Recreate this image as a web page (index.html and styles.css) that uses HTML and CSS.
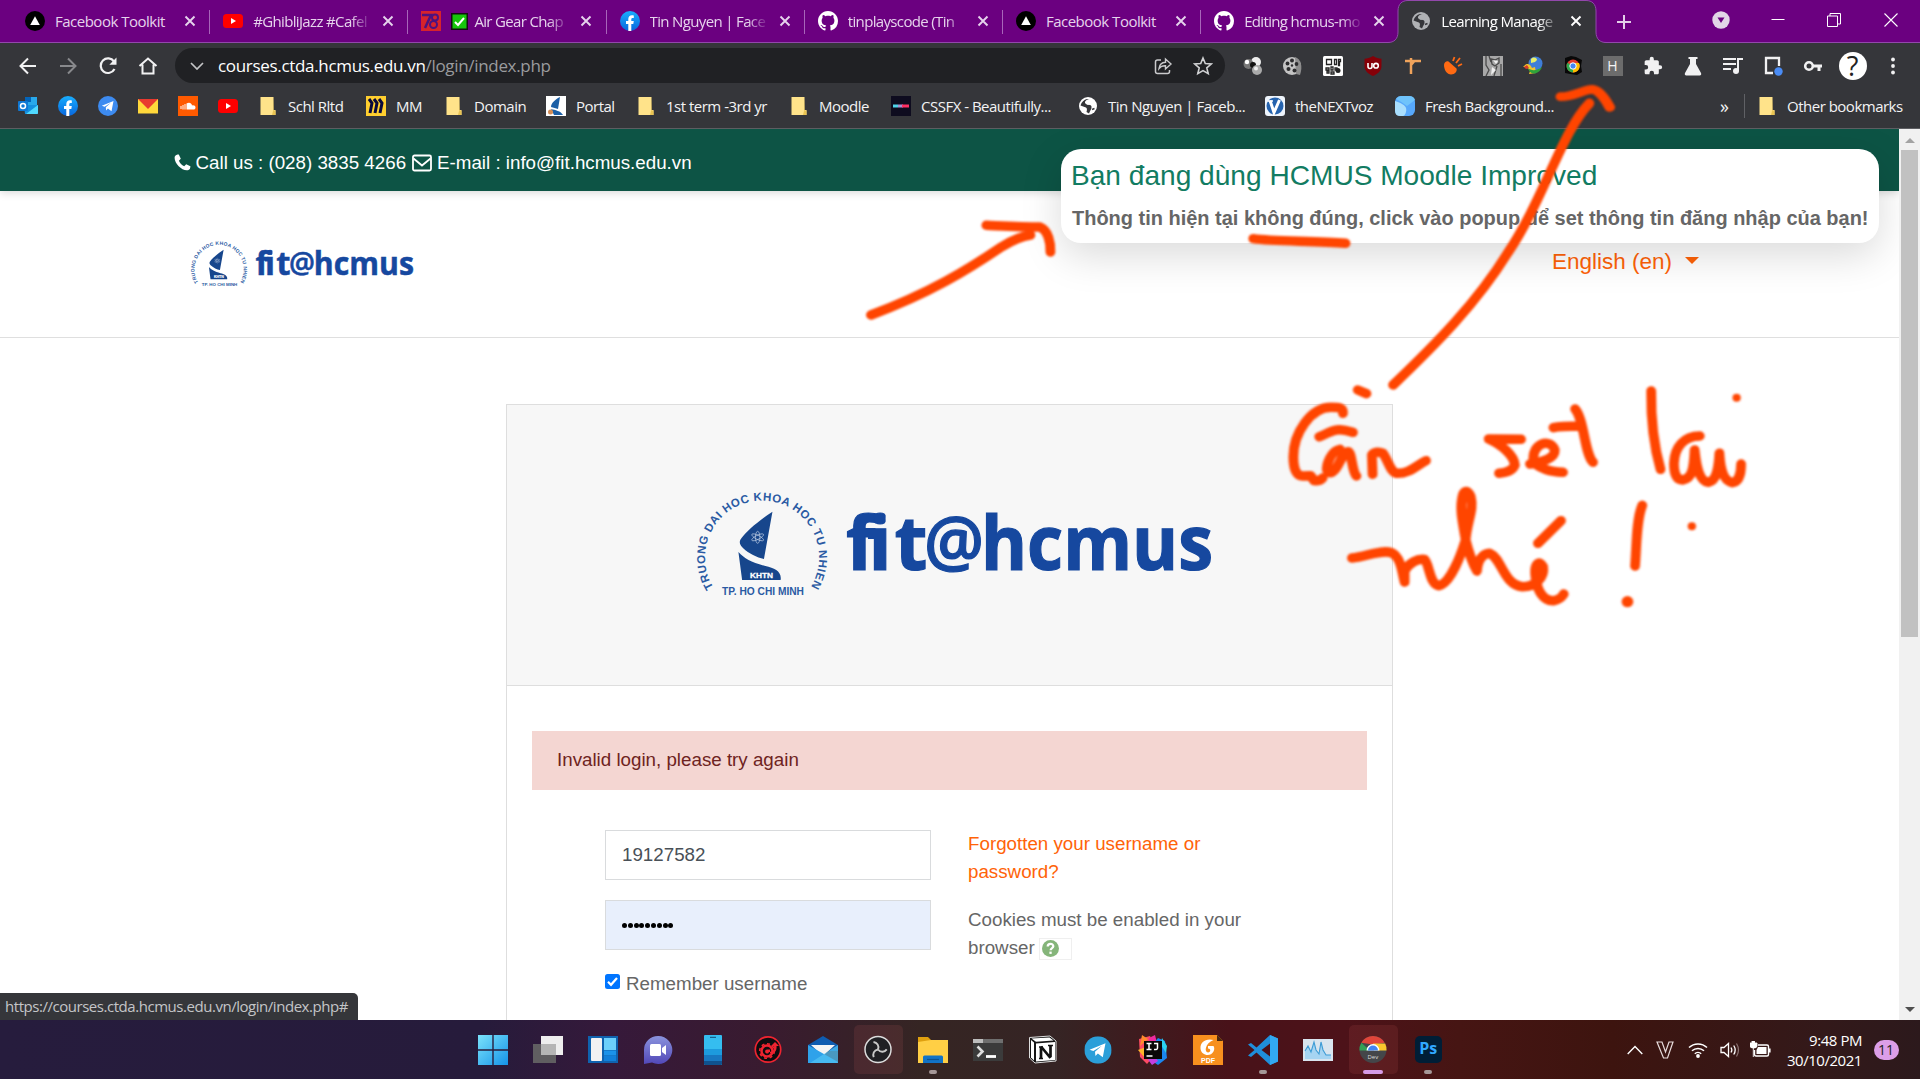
FILE: index.html
```html
<!DOCTYPE html>
<html lang="en">
<head>
<meta charset="utf-8">
<title>Learning Management System</title>
<link rel="stylesheet" href="styles.css">
</head>
<body>
<svg class="defs" width="0" height="0">
  <defs>
    <linearGradient id="fbg" x1="0" y1="0" x2="0" y2="1"><stop offset="0" stop-color="#19aefe"/><stop offset="1" stop-color="#0866dd"/></linearGradient>
    <linearGradient id="wing" x1="0" y1="0" x2="1" y2="1"><stop offset="0" stop-color="#7be3fb"/><stop offset="1" stop-color="#1593e8"/></linearGradient>
    <linearGradient id="chatg" x1="0" y1="0" x2="0" y2="1"><stop offset="0" stop-color="#8a93dd"/><stop offset="1" stop-color="#5248b8"/></linearGradient>
    <clipPath id="fitclip"><path d="M840 500H885.500V525H894V500H930V580H840z"/></clipPath>
    <symbol id="triangle" viewBox="0 0 20 20"><circle cx="10" cy="10" r="10" fill="#000"/><path d="M10 5.2 14.8 14H5.2z" fill="#fff"/></symbol>
    <symbol id="youtube" viewBox="0 0 20 20"><rect x="0" y="3" width="20" height="14" rx="3.5" fill="#f00"/><path d="M8 7v6l5-3z" fill="#fff"/></symbol>
    <symbol id="facebook" viewBox="0 0 20 20"><circle cx="10" cy="10" r="10" fill="url(#fbg)"/><path d="M8.3 20v-7H6v-3h2.300V8c0-2.500 1.500-3.800 3.600-3.800.7 0 1.500.1 1.900.2v2.500h-1.200c-1 0-1.300.6-1.300 1.300V10h2.500l-.5 3h-2v7z" fill="#fff"/></symbol>
    <symbol id="github" viewBox="0 0 16 16"><path fill="#fff" d="M8 0C3.580 0 0 3.580 0 8c0 3.540 2.290 6.530 5.470 7.590.4.070.55-.17.55-.38 0-.19-.01-.82-.01-1.490-2.010.37-2.530-.49-2.690-.94-.09-.23-.48-.94-.82-1.130-.28-.15-.68-.52-.01-.53.63-.01 1.080.58 1.230.82.72 1.210 1.870.87 2.330.66.070-.52.28-.87.51-1.070-1.780-.2-3.640-.89-3.640-3.950 0-.87.31-1.590.82-2.150-.08-.2-.36-1.020.08-2.120 0 0 .67-.21 2.200.82.64-.18 1.320-.27 2-.27s1.360.09 2 .27c1.530-1.040 2.200-.82 2.200-.82.44 1.100.16 1.920.08 2.120.51.56.82 1.270.82 2.150 0 3.070-1.870 3.750-3.650 3.950.29.25.54.73.54 1.480 0 1.070-.01 1.930-.01 2.200 0 .21.15.46.55.38A8.010 8.010 0 0 0 16 8c0-4.420-3.580-8-8-8z"/></symbol>
    <symbol id="globe" viewBox="0 0 20 20"><circle cx="10" cy="10" r="9" fill="currentColor"/><path d="M11.500 3C8 3.500 6 6 7.500 7.500S13 8 13.500 10.500 12 14.500 11 17.500L8.500 16C9.500 13 9 11.500 6.500 11L2.500 9.500C3.500 6 6 3.500 9 3z" fill="#35363a"/><path d="M9 5.500c-1.500 1.500 0 2.500 2 2.500h3.500l2-2.500" fill="none" stroke="currentColor" stroke-width="1.600"/><path d="M14 13.500l2.500-1" stroke="#35363a" stroke-width="1.500"/></symbol>
    <symbol id="close" viewBox="0 0 12 12"><path d="M1.500 1.500l9 9M10.500 1.500l-9 9" stroke="currentColor" stroke-width="1.900"/></symbol>
    <symbol id="folder" viewBox="0 0 20 20"><path d="M2.500 1h13v13h2v5h-15z" fill="#ffe38a"/><path d="M15.500 1v13.500h2V19h-3.500l1-4z" fill="#e9c453"/></symbol>
    <symbol id="telegram" viewBox="0 0 20 20"><circle cx="10" cy="10" r="10" fill="currentColor"/><path d="M3.800 9.800 15.500 5l-2 10.300-3.600-2.700-1.800 1.800-.3-3.200 5-4.400-6.200 3.900z" fill="#fff"/></symbol>
    <symbol id="fitlogo" viewBox="690 485 530 115">
      <path id="ring" d="M713.500 587.500 A57 57 0 1 1 810.500 587.500" fill="none"/>
      <text class="ring-text"><textPath href="#ring" textLength="241">TRUONG DAI HOC KHOA HOC TU NHIEN</textPath></text>
      <g transform="translate(660 460) scale(.3699 .3333)">
        <path fill="#17468c" d="M304 155C270 180 235 212 220 235c-8 11-4 21 5 30 15 16 37 28 56 32zM212 276l10 84h104c4-25-16-36-41-42-37-10-57-23-73-42z"/>
        <g fill="none" stroke="#b9c9e2" stroke-width="2"><ellipse cx="264" cy="232" rx="6" ry="18"/><ellipse cx="264" cy="232" rx="6" ry="18" transform="rotate(60 264 232)"/><ellipse cx="264" cy="232" rx="6" ry="18" transform="rotate(-60 264 232)"/></g>
      </g>
      <text class="khtn" x="750" y="578" textLength="23" lengthAdjust="spacingAndGlyphs">KHTN</text>
      <text class="city" x="722" y="594.700" textLength="82" lengthAdjust="spacingAndGlyphs">TP. HO CHI MINH</text>
      <text class="word" x="846 868.500 894.500" y="569.700" clip-path="url(#fitclip)">fit</text>
      <path d="M868 529.500h9v9.500h-9z" fill="#16489f"/>
      <text class="word at" x="924" y="566" textLength="60" lengthAdjust="spacingAndGlyphs">@</text>
      <text class="word" x="981" y="569.700" textLength="232" lengthAdjust="spacingAndGlyphs">hcmus</text>
    </symbol>
    <filter id="soft" x="-5%" y="-5%" width="110%" height="110%"><feGaussianBlur stdDeviation="1.100"/></filter>
  </defs>
</svg>

<header class="chrome">
  <div class="tabstrip">
    <div class="tab"><svg class="fav"><use href="#triangle"/></svg><span class="title">Facebook Toolkit</span><svg class="x"><use href="#close"/></svg></div>
    <div class="tab"><svg class="fav"><use href="#youtube"/></svg><span class="title fade">#GhibliJazz #Cafel</span><svg class="x"><use href="#close"/></svg></div>
    <div class="tab"><svg class="fav" viewBox="0 0 20 20"><rect width="20" height="20" fill="#d6232c"/><path d="M1 4h9L4 17" fill="none" stroke="#4b1280" stroke-width="2.500"/><ellipse cx="14" cy="6.500" rx="3" ry="3" fill="none" stroke="#4b1280" stroke-width="2"/><ellipse cx="12.500" cy="13.500" rx="3.500" ry="3.500" fill="none" stroke="#4b1280" stroke-width="2"/></svg><span class="title fade"><svg class="check" viewBox="0 0 17 17"><rect x=".75" y=".75" width="15.500" height="15.500" fill="#16c60c" stroke="#111" stroke-width="1.500"/><path d="M4 9l3 3 6-7" fill="none" stroke="#fff" stroke-width="2"/></svg>Air Gear Chap</span><svg class="x"><use href="#close"/></svg></div>
    <div class="tab"><svg class="fav"><use href="#facebook"/></svg><span class="title fade">Tin Nguyen | Face</span><svg class="x"><use href="#close"/></svg></div>
    <div class="tab"><svg class="fav"><use href="#github"/></svg><span class="title fade">tinplayscode (Tin</span><svg class="x"><use href="#close"/></svg></div>
    <div class="tab"><svg class="fav"><use href="#triangle"/></svg><span class="title">Facebook Toolkit</span><svg class="x"><use href="#close"/></svg></div>
    <div class="tab last"><svg class="fav"><use href="#github"/></svg><span class="title fade">Editing hcmus-mo</span><svg class="x"><use href="#close"/></svg></div>
    <div class="tab active">
      <svg class="tabshape" viewBox="0 0 218 43"><path d="M0 43V42.500C6 42.500 10 39 10 32V11C10 4 14 .5 20 .5H198C204 .5 208 4 208 11V32C208 39 212 42.500 218 42.500V43z" fill="#35363a"/><path d="M0 42.500C6 42.500 10 39 10 32V11C10 4 14 .5 20 .5H198C204 .5 208 4 208 11V32C208 39 212 42.500 218 42.500" fill="none" stroke="#9248ab"/></svg>
      <svg class="fav"><use href="#globe"/></svg><span class="title fade">Learning Manage</span><svg class="x"><use href="#close"/></svg></div>
    <svg class="plus" viewBox="0 0 16 16"><path d="M8 1v14M1 8h14" stroke="#e3cfe9" stroke-width="2"/></svg>
    <div class="wincontrols">
      <svg viewBox="0 0 18 18" width="18" height="18"><circle cx="9" cy="9" r="8.700" fill="#e2d5e7"/><path d="M5.500 6.500h7L9 12z" fill="#6b0080"/></svg>
      <svg viewBox="0 0 14 14" width="14" height="14"><path d="M.5 6.500h13" stroke="#fff"/></svg>
      <svg viewBox="0 0 14 14" width="14" height="14"><path d="M.5 3h10v10.500H.5zM3 3V.5h10.500V11h-3" fill="none" stroke="#fff"/></svg>
      <svg viewBox="0 0 14 14" width="14" height="14"><path d="M.5.5l13 13M13.500.5l-13 13" stroke="#fff" stroke-width="1.100"/></svg>
    </div>
  </div>

  <div class="toolbar">
    <nav class="navbtns">
      <svg viewBox="0 0 20 20"><path d="M18 10H3M10 2.500 2.500 10l7.500 7.500" fill="none" stroke="#f1f1f2" stroke-width="2"/></svg>
      <svg viewBox="0 0 20 20"><path d="M2 10h15M10 2.500l7.500 7.500-7.500 7.500" fill="none" stroke="#88898c" stroke-width="2"/></svg>
      <svg viewBox="0 0 20 20"><path d="M16.500 13A7.300 7.300 0 1 1 16 5.500" fill="none" stroke="#f1f1f2" stroke-width="2.200"/><path d="M18.500 1.500v7.200h-7.200z" fill="#f1f1f2"/></svg>
      <svg viewBox="0 0 20 20"><path d="M1.500 10 10 2.500l8.500 7.500M4.500 8.500V17.500h11V8.500" fill="none" stroke="#f1f1f2" stroke-width="2"/></svg>
    </nav>
    <div class="omnibox">
      <svg class="chev" viewBox="0 0 14 8"><path d="M1 1l6 6 6-6" fill="none" stroke="#c3c4c6" stroke-width="1.700"/></svg>
      <span class="url"><b>courses.ctda.hcmus.edu.vn</b>/login/index.php</span>
      <svg class="act" viewBox="0 0 20 20"><path d="M8 4H4.500Q2.500 4 2.500 6v9.500q0 2 2 2h10q2 0 2-2V14" fill="none" stroke="#c9cacc" stroke-width="1.500"/><path d="M6 12.500C6.500 8 9 6.500 12.500 6.300V3l5.500 5-5.500 5V9.800C9.500 9.700 7.500 10.500 6 12.500z" fill="none" stroke="#c9cacc" stroke-width="1.400"/></svg>
      <svg class="act" viewBox="0 0 20 20"><path d="M10 2l2.300 5.500 6 .5-4.500 3.900 1.400 5.800L10 14.600l-5.200 3.100 1.400-5.800L1.700 8l6-.5z" fill="none" stroke="#d0d1d3" stroke-width="1.600"/></svg>
    </div>
    <div class="exts">
      <svg viewBox="0 0 20 20"><circle cx="13" cy="6" r="5" fill="#eee"/><circle cx="5.500" cy="8" r="5" fill="#777"/><circle cx="4" cy="6" r="2.200" fill="#fff"/><circle cx="10" cy="9" r="3" fill="#111"/><circle cx="14" cy="14" r="5" fill="#aaa"/><circle cx="13" cy="12.500" r="2" fill="#eee"/></svg>
      <svg viewBox="0 0 20 20"><circle cx="9" cy="10" r="9" fill="#c4c4c4"/><path d="M12 1c6 2 8 9 5 18l-4-1z" fill="#8d8d8d"/><g fill="#2c2c2e"><circle cx="9" cy="4.500" r="2"/><circle cx="4.500" cy="7.500" r="1.900"/><circle cx="13.500" cy="8" r="1.900"/><circle cx="5.500" cy="13" r="2"/><circle cx="11.500" cy="14.500" r="2"/><circle cx="9" cy="9.500" r="1.200"/></g></svg>
      <svg viewBox="0 0 20 20"><rect width="20" height="20" rx="1.500" fill="#fff"/><path d="M3.500 3.500h5v5h-5zM3 12h3v2H3zm5-1h2v3H8zm-4 4h2v2H4zm4 1h3v2H8zm4-4h2v2h-2zm-.5-8.500h2v5h-2zm4 0h2v2h-2zm0 3h1v3h-1z" fill="none" stroke="#222" stroke-width="1.300"/><circle cx="15" cy="14.500" r="2.500" fill="#222"/></svg>
      <svg viewBox="0 0 20 20"><path d="M10 0c3 2 6 2.500 8.500 2.700V10c0 5-4 8-8.500 10-4.500-2-8.500-5-8.500-10V2.700C4 2.500 7 2 10 0z" fill="#850008"/><path d="M5 7v3.500a2 2 0 0 0 4 0V7" fill="none" stroke="#fff" stroke-width="1.600"/><circle cx="13" cy="9.700" r="2.300" fill="none" stroke="#fff" stroke-width="1.600"/></svg>
      <svg viewBox="0 0 20 20"><path d="M2 5h16M8 2v16M8 9l3-3.500" fill="none" stroke="#f0a35b" stroke-width="2.500"/></svg>
      <svg viewBox="0 0 20 20"><path d="M1 9C1 6 4 4.500 5.500 5.500l8 7C14.500 15 12 18.500 8 18.500S1 14 1 9z" fill="#ff6a13"/><path d="M10 5l1.500-4M13 7l4-5M15 10l4-2" stroke="#ff6a13" stroke-width="1.800"/></svg>
      <svg viewBox="0 0 20 20"><rect width="20" height="20" fill="#a8a8a8"/><path d="M3 0v9l3 5-3 6M8 3l4 1 4-2v5l-4 3-3-2zM14 10l-3 10M18 8v12M6 0l2 6" stroke="#4a4a4a" stroke-width="1.300" fill="none"/><path d="M9 11l4 3-5 5zM10 4l5 1-2 3z" fill="#eee"/></svg>
      <svg viewBox="0 0 20 20"><circle cx="12.500" cy="7.500" r="7" fill="#3f7ed8"/><path d="M8 3c3-3 6-1 6 1l-2 2-4 1z" fill="#e8ef6a"/><path d="M0 11c4-5 7-3 9 1l3-1 1 6-7 1 1-3c-2-3-4-4-7-4z" fill="#f2c52c"/><path d="M5 12c3 3 9 3 14-1-3 8-12 9-14 1z" fill="#2fa33a"/><path d="M1 11l3-2 2 3-3 1z" fill="#d83a2a"/></svg>
      <svg viewBox="0 0 20 20"><path d="M2 2l6-2 5 1 6 3-1 6 1 6-5 3-7-1-5-1V9z" fill="#080808"/><circle cx="10" cy="10" r="6.500" fill="#e33b2e"/><path d="M10 10 4.400 6.800A6.500 6.500 0 0 0 10 16.500z" fill="#2da94f"/><path d="M10 10v6.500a6.500 6.500 0 0 0 6-9.500h-6z" fill="#fdbd00"/><circle cx="10" cy="10" r="3.200" fill="#4285f4" stroke="#fff"/></svg>
      <span class="hext">H</span>
      <svg viewBox="0 0 24 24"><path fill="#f1f1f2" d="M20.500 11H19V7c0-1.100-.9-2-2-2h-4V3.500a2.500 2.500 0 0 0-5 0V5H4c-1.100 0-2 .9-2 2v3.800h1.500a2.700 2.700 0 0 1 0 5.400H2V20c0 1.100.9 2 2 2h3.800v-1.500a2.700 2.700 0 0 1 5.400 0V22H17c1.100 0 2-.9 2-2v-4h1.500a2.500 2.500 0 0 0 0-5z"/></svg>
      <svg viewBox="0 0 20 20"><path d="M5.500 1h9v2h-1.500v5L18 17c.6 1.400 0 2.500-1.300 2.500H3.300C2 19.500 1.400 18.400 2 17L7 8V3H5.500z" fill="#f1f1f2"/></svg>
      <svg viewBox="0 0 20 20"><path d="M0 3h13M0 8h13M0 13h8" stroke="#f1f1f2" stroke-width="2"/><circle cx="13" cy="15" r="3" fill="#f1f1f2"/><path d="M15 15V3h5" fill="none" stroke="#f1f1f2" stroke-width="2"/></svg>
      <svg viewBox="0 0 20 20"><path d="M10 17H3V2h13v8" fill="none" stroke="#f1f1f2" stroke-width="2.300"/><circle cx="15.500" cy="15.500" r="4.200" fill="#4a8cf5"/></svg>
      <svg viewBox="0 0 20 20"><circle cx="6" cy="10" r="3.800" fill="none" stroke="#f1f1f2" stroke-width="2.600"/><path d="M10 10h9M16 10v5" stroke="#f1f1f2" stroke-width="3"/></svg>
      <span class="avatar">?</span>
      <svg viewBox="0 0 20 20"><g fill="#f1f1f2"><circle cx="10" cy="3.500" r="1.900"/><circle cx="10" cy="10" r="1.900"/><circle cx="10" cy="16.500" r="1.900"/></g></svg>
    </div>
  </div>

  <div class="bookmarks">
    <a><svg viewBox="0 0 20 20"><path d="M7 1h12v9H7z" fill="#28a8ea"/><path d="M7 1h6v5H7z" fill="#0364b8"/><path d="M6 9l14 0v8q0 1-1 1H7z" fill="#1490df"/><path d="M20 9 8 18h11q1 0 1-1z" fill="#50d9ff"/><rect y="5" width="10" height="10" rx="1" fill="#0f78d4"/><circle cx="5" cy="10" r="2.500" fill="none" stroke="#fff" stroke-width="1.500"/></svg></a>
    <a><svg><use href="#facebook"/></svg></a>
    <a class="tgblue"><svg><use href="#telegram"/></svg></a>
    <a><svg viewBox="0 0 20 20"><rect y="3" width="20" height="14.500" fill="#ffd83b"/><path d="M0 3h20L10 13z" fill="#e8392f"/></svg></a>
    <a><svg viewBox="0 0 20 20"><rect width="20" height="20" fill="#ff5a00"/><path d="M3 13v-3M5 13.500V9M7 13.500V8" stroke="#fff"/><path d="M8.500 13.500V7.500c3-2 5.500 0 5.500 2 2-.5 3.500.5 3.500 2s-1 2-2 2z" fill="#fff"/></svg></a>
    <a><svg><use href="#youtube"/></svg></a>
    <a><svg><use href="#folder"/></svg>Schl Rltd</a>
    <a><svg viewBox="0 0 20 20"><rect width="20" height="20" fill="#ffcf2f"/><path d="M3 3l3 4-2 10M8 3l3 4-2 10M13 3l3 4-2 10" fill="none" stroke="#0a0a3c" stroke-width="3"/></svg>MM</a>
    <a><svg><use href="#folder"/></svg>Domain</a>
    <a><svg viewBox="0 0 20 20"><rect width="20" height="20" fill="#fff"/><path d="M14 1l-2 12L5 11C5 7 10 3 14 1zM5 13c4 1 10 2 12 6H8z" fill="#1b5fa6"/><circle cx="4.500" cy="16" r="2.500" fill="#d28c55"/></svg>Portal</a>
    <a><svg><use href="#folder"/></svg>1st term -3rd yr</a>
    <a><svg><use href="#folder"/></svg>Moodle</a>
    <a><svg viewBox="0 0 20 20"><rect width="20" height="20" fill="#0e0c1f"/><path d="M2 10h5" stroke="#4fd3ea" stroke-width="3"/><path d="M7 10h5" stroke="#a98fd0" stroke-width="3"/><path d="M11 10h7" stroke="#ff2f63" stroke-width="3"/></svg>CSSFX - Beautifully...</a>
    <a class="white"><svg><use href="#globe"/></svg>Tin Nguyen | Faceb...</a>
    <a><svg viewBox="0 0 20 20"><rect width="20" height="20" rx="3" fill="#eef4fb"/><circle cx="10" cy="10" r="8.500" fill="#2563ae"/><path d="M5 4.500l4 12L14.500 4" fill="none" stroke="#fff" stroke-width="3"/><path d="M3 5h5" stroke="#fff" stroke-width="1.500"/></svg>theNEXTvoz</a>
    <a><svg viewBox="0 0 20 20"><rect width="20" height="20" rx="6" fill="#57a8fb"/><path d="M0 5C6 7 10 9 11 12S10 20 8 20H5q-5 0-5-5z" fill="#a9defd"/><path d="M1 3Q3 0 6 0h8q5 0 6 4l-8 6Q7 6 1 3z" fill="#6fc3fb"/></svg>Fresh Background...</a>
    <a class="more">»</a>
    <a class="other"><svg><use href="#folder"/></svg>Other bookmarks</a>
  </div>
</header>

<main class="viewport">
  <div class="page">
    <div class="topbar">
      <svg width="17" height="17" viewBox="0 0 17 17"><path d="M.8 2.500Q1.500.8 3.500.5L4.800.6 6.800 4.700 4.900 6.800C6 9.300 7.600 11 10.200 12.200L12.200 10.200 16.400 12.200Q16.600 15 14.500 16C8.500 18-.8 8.500.8 2.500z" fill="#fff"/></svg>
      <span class="call">Call us : (028) 3835 4266</span>
      <svg width="20" height="18" viewBox="0 0 20 18"><rect x="1" y="1.500" width="18" height="15" rx="1.500" fill="none" stroke="#fff" stroke-width="1.800"/><path d="M1.500 4.500 10 11.500l8.500-7" fill="none" stroke="#fff" stroke-width="1.800"/></svg>
      <span>E-mail : info@fit.hcmus.edu.vn</span>
    </div>
    <div class="brandbar">
      <svg class="logo-sm"><use href="#fitlogo"/></svg>
      <span class="lang">English (en)<i></i></span>
    </div>
    <section class="card">
      <div class="card-head"><svg class="logo-lg"><use href="#fitlogo"/></svg></div>
      <div class="alert">Invalid login, please try again</div>
      <div class="cols">
        <form>
          <div class="field">19127582</div>
          <div class="field pass"><i></i><i></i><i></i><i></i><i></i><i></i><i></i><i></i><i></i></div>
          <label><svg width="15" height="15" viewBox="0 0 15 15"><rect width="15" height="15" rx="2.500" fill="#0075ff"/><path d="M3 7.800 6 10.800 12 4" fill="none" stroke="#fff" stroke-width="2.200"/></svg>Remember username</label>
        </form>
        <div class="side">
          <p><a>Forgotten your username or password?</a></p>
          <p>Cookies must be enabled in your browser <span class="help"><svg width="17" height="17" viewBox="0 0 17 17"><circle cx="8.500" cy="8.500" r="8.500" fill="#85b57a"/><path d="M5.700 6.500C5.700 3 11.500 3 11.300 6.400 11.200 8.200 8.600 8 8.600 10.300" fill="none" stroke="#fff" stroke-width="2.200"/><rect x="7.400" y="11.600" width="2.300" height="2.300" fill="#fff"/></svg></span></p>
        </div>
      </div>
    </section>
    <aside class="popup">
      <h2>Bạn đang dùng HCMUS Moodle Improved</h2>
      <p>Thông tin hiện tại không đúng, click vào popup để set thông tin đăng nhập của bạn!</p>
    </aside>
    <div class="status">https://courses.ctda.hcmus.edu.vn/login/index.php#</div>
  </div>
  <div class="scrollbar"><i class="up"></i><div class="thumb"></div><i class="down"></i></div>
</main>

<footer class="taskbar">
  <div class="apps">
    <span><svg viewBox="0 0 30 30"><path d="M0 0h14.300v14.300H0zM15.700 0H30v14.300H15.700zM0 15.700h14.300V30H0zM15.700 15.700H30V30H15.700z" fill="url(#wing)"/></svg></span>
    <span><svg viewBox="0 0 30 30"><rect x="8" y="1" width="22" height="19" fill="#eee"/><rect x="0" y="9" width="23" height="19" fill="#666" opacity=".9"/><rect x="8" y="9" width="15" height="11" fill="#b5b5b5"/></svg></span>
    <span><svg viewBox="0 0 30 30"><rect y="1" width="30" height="27" fill="#0f62ae"/><rect x="3" y="3" width="11" height="23" rx="1" fill="#f2f2f2"/><rect x="16" y="3" width="12" height="12" fill="#6cd0fb"/><rect x="16" y="15.500" width="12" height="5" fill="#1b93ea"/><rect x="16" y="21" width="12" height="5" fill="#1180da"/></svg></span>
    <span><svg viewBox="0 0 30 30"><path d="M15 1a14 14 0 1 1-6 26.500L1 29V15A14 14 0 0 1 15 1z" fill="url(#chatg)"/><rect x="7" y="9" width="11" height="12" rx="1.500" fill="#fff"/><path d="M19 13l4-3v10l-4-3z" fill="#fff"/></svg></span>
    <span><svg viewBox="0 0 30 30"><rect x="6" width="18" height="30" rx="1" fill="#35bdf0"/><path d="M6 14h18v6H6z" fill="#1d9bdd"/><path d="M6 20h18v6H6z" fill="#1878c0"/><path d="M6 26h18v3q0 1-1 1H7q-1 0-1-1z" fill="#10528e"/><path d="M12 2.300h6" stroke="#0f4a75"/></svg></span>
    <span><svg viewBox="0 0 30 30"><circle cx="15" cy="14.500" r="12.700" fill="#0d0d0f" stroke="#ef2430" stroke-width="1.700"/><circle cx="14" cy="16" r="5.500" fill="none" stroke="#ef2430" stroke-width="2.500"/><circle cx="14" cy="16" r="7.300" fill="none" stroke="#ef2430" stroke-width="1.600" stroke-dasharray="3 2.700"/><path d="M17 14.500h-3a2 2 0 1 0 2 2.500c4 0 5.500-3 5-6H18l4-4 4 4h-2.500c.5 5-2 8-6.500 7z" fill="#ef2430"/></svg></span>
    <span><svg viewBox="0 0 30 30"><path d="M0 10 15 1l15 9v6H0z" fill="#0f5cb0"/><path d="M3 10h24l-12 11z" fill="#f4f4f4"/><path d="M0 10l30 17q0 1-1 1H0z" fill="#2fa2ea"/><path d="M30 10v18H2z" fill="#50c1f3" opacity=".75"/></svg></span>
    <span class="open"><svg viewBox="0 0 30 30"><circle cx="15" cy="14.500" r="13" fill="#202024" stroke="#dcdcdc" stroke-width="1.500"/><g fill="none" stroke="#c9c9c9" stroke-width="1.900"><path id="blade" d="M15 14.500C16.500 10.500 14 7.500 10.500 7"/><use href="#blade" transform="rotate(120 15 14.500)"/><use href="#blade" transform="rotate(240 15 14.500)"/></g></svg></span>
    <span class="dot"><svg viewBox="0 0 30 30"><path d="M0 2h10l3 3v4H0z" fill="#dfa00f"/><path d="M0 7l13-2h17v23H0z" fill="#ffcf45"/><path d="M5 28v-6q0-1.500 1.500-1.500h17q1.500 0 1.500 1.500v6z" fill="#1173c6"/><path d="M9 24.500h12" stroke="#0b5291" stroke-width="1.200"/></svg></span>
    <span><svg viewBox="0 0 30 30"><rect y="4" width="30" height="22" fill="#3b3b3b"/><path d="M0 4h30v4H0z" fill="#6f6f6f"/><path d="M0 4h10v4H0z" fill="#bdbdbd"/><path d="M4.500 11.500l5 5-5 5" fill="none" stroke="#dedede" stroke-width="2.600"/><path d="M13 21.500h10" stroke="#fff" stroke-width="2.800"/></svg></span>
    <span><svg viewBox="0 0 30 30"><path d="M1.500 2.500 22 1l6 5v20l-21 2-5.500-5z" fill="#151515" stroke="#ddd" stroke-width="1"/><path d="M3.500 3.500 21.500 2.500 25.500 5.500 8 6.800z" fill="#fff"/><path d="M3 5l3 2.500v18L3 22.500z" fill="#fff"/><path d="M8 8.500 27 7v18L8 26.500z" fill="#fff"/><path d="M13 23.500V12M22.500 22V10.500M13 11.500l9.500 11.500" stroke="#111" stroke-width="2.700"/><path d="M11 12h4M20 10.500h5M11 23.500h4" stroke="#111" stroke-width="1.300"/></svg></span>
    <span class="tg2"><svg viewBox="-1 -1 22 22"><use href="#telegram" width="20" height="20"/></svg></span>
    <span><svg viewBox="0 0 30 30"><path d="M1 4l11-3 3 7v14l-6 7-7-7z" fill="#fd4b62"/><path d="M0 15l8-3v12z" fill="#fdb52a"/><path d="M4 0l6 4-8 7z" fill="#fe8a2d"/><path d="M11 3l6-3 2 8h-8z" fill="#ee2aa0"/><path d="M20 3l7 3 2 17-9 7-6-4 2-18z" fill="#1a86f0"/><path d="M24 3l5 8-1 7-5-8z" fill="#2bd3ee"/><path d="M8 22l6 8 6-4-3-4z" fill="#c43fe0"/><rect x="6" y="6" width="18" height="18" fill="#080808"/><path d="M8.500 8.500h5M11 8.500v6M8.500 14.500h5M16 8.500h3.500v4.500q0 2-3.500 1.500" fill="none" stroke="#fff" stroke-width="1.500"/><path d="M8.500 21h6" stroke="#fff" stroke-width="1.500"/></svg></span>
    <span><svg viewBox="0 0 30 30"><path d="M0 0h24l6 6v24H0z" fill="#f7901e"/><path d="M24 0v6h6z" fill="#4a2a10"/><path d="M20.500 5C13 3 7 7 7.500 13.500c.5 7 10 9 13 3 1-2 1-4 0-5.500H15v2.500c3 0 3 3.500 0 4-4-.5-3-9 5.500-12.500z" fill="#fff"/><text x="8" y="28" class="pdf">PDF</text></svg></span>
    <span class="dot"><svg viewBox="0 0 30 30"><path d="M22 0l8 3.500v23L22 30 8.500 17.500 3 22l-3-1.500L6.500 15 0 9.500 3 8l5.500 4.500z" fill="#1f8fdb"/><path d="M22 0l8 3.500v23L22 30z" fill="#32a9f2"/><path d="M22 8.500V21.500L13.500 15z" fill="#4a1119"/></svg></span>
    <span><svg viewBox="0 0 30 30"><rect y="4" width="30" height="22" fill="#d9e5ef"/><path d="M2 24V16l3-5 3 6 3-10 2 8 3 4 2-12 2 8 3 5 5 0v4z" fill="#a6d4f2"/><path d="M2 16l3-5 3 6 3-10 2 8 3 4 2-12 2 8 3 5h5" fill="none" stroke="#3c9bd5" stroke-width="1.100"/></svg></span>
    <span class="open current"><svg viewBox="0 0 30 30"><circle cx="15" cy="14.500" r="13.500" fill="#444649"/><path d="M3.300 7.700A13.500 13.500 0 0 1 26.700 7.700L15 9.500z" fill="#e0453a"/><path d="M3.300 7.700A13.500 13.500 0 0 0 1.500 15.500H12z" fill="#34a056"/><path d="M15 8.500h12.200a13.500 13.500 0 0 1 1.300 7H16z" fill="#fbc72d"/><path d="M8.500 15.500a6.500 6.500 0 0 1 13 0z" fill="#fff"/><path d="M10 15.500a5 5 0 0 1 10 0z" fill="#4385f2"/><text x="9.500" y="24" class="dev">Dev</text></svg></span>
    <span class="dot"><span class="ps">Ps</span></span>
  </div>
  <div class="tray">
    <svg width="16" height="10" viewBox="0 0 16 10"><path d="M.7 9 8 1.500 15.300 9" fill="none" stroke="#fff" stroke-width="1.400"/></svg>
    <svg width="18" height="18" viewBox="0 0 18 18"><path d="M1 1h5l3.500 10L13 1h4l-5.500 16h-4z" fill="none" stroke="#e8dcdc" stroke-width="1.200"/></svg>
    <svg width="20" height="17" viewBox="0 0 20 17"><path d="M1 6.500a13 13 0 0 1 18 0M4 9.800a8.700 8.700 0 0 1 12 0M6.800 12.700a4.600 4.600 0 0 1 6.400 0" fill="none" stroke="#fff" stroke-width="1.500"/><circle cx="10" cy="15" r="1.900" fill="#fff"/></svg>
    <svg width="20" height="16" viewBox="0 0 20 16"><path d="M1 5.500h3L8.500 1.500v13L4 10.500H1z" fill="none" stroke="#fff" stroke-width="1.300"/><path d="M11 5.500q1.700 2.500 0 5M13.700 3.500q3 4.500 0 9" fill="none" stroke="#fff" stroke-width="1.300"/><path d="M16.500 1.500q4 6.500 0 13" fill="none" stroke="#8d7474" stroke-width="1.200"/></svg>
    <svg width="21" height="17" viewBox="0 0 21 17"><path d="M8 4h9q1.500 0 1.500 1.500v8q0 1.500-1.500 1.500H6q-1.500 0-1.500-1.500V9" fill="none" stroke="#fff" stroke-width="1.400"/><path d="M8 6h8.500v7h-10V9z" fill="#fff"/><path d="M19.800 7.500v4" stroke="#fff" stroke-width="1.600"/><path d="M2 0v2h2.500V0M0 2h7v3q0 2-3.500 2T0 5zM3.300 6v10" fill="#fff" stroke="#fff" stroke-width=".9"/></svg>
    <div class="clock">9:48 PM<br>30/10/2021</div>
    <span class="badge">11</span>
  </div>
</footer>

<svg class="ink" viewBox="0 0 1920 1079">
  <g filter="url(#soft)">
    <g transform="translate(840 130) scale(.34439 .33333)">
      <path d="M90 555C260 490 370 420 470 350 510 325 530 318 553 315"/>
      <path d="M425 286C480 288 530 290 580 291 605 300 612 340 611 366"/>
      <path d="M1200 326C1260 335 1380 332 1468 340"/>
    </g>
    <g transform="translate(1380 90) scale(.34439 .33333)"><path d="M38 885C160 765 280 640 370 490 475 330 530 120 608 40"/></g>
    <g transform="translate(1280 0) scale(.40816 .33333)"><path class="head" d="M688 290C720 290 740 270 765 268 785 272 798 300 808 322"/></g>
    <g transform="translate(1240 360) scale(.34439 .33333)">
      <path d="M342 90 367 101"/>
      <path d="M299 160C300 142 285 142 265 142 205 142 155 220 155 290 155 330 165 350 185 348L205 347 215 362C228 364 235 360 240 354"/>
      <path d="M230 230C255 222 265 208 290 209 310 210 320 215 328 217"/>
      <path d="M290 268C265 272 252 310 252 328 258 348 275 335 285 315 297 290 305 275 315 275 325 280 325 335 338 348"/>
      <path d="M385 343 383 285C390 275 405 275 415 280 430 300 435 335 455 340 490 342 510 318 540 302"/>
      <path d="M816 238 722 237C760 255 795 285 798 315 790 335 770 338 752 340"/>
      <path d="M842 312C880 305 915 295 914 270 905 245 880 245 865 260 850 275 850 300 855 310 875 325 895 335 938 337"/>
      <path d="M910 203C930 198 950 198 985 198M973 147C1000 180 1000 280 1025 307"/>
      <path d="M1194 93C1193 180 1205 270 1221 328"/>
      <path d="M1335 228C1290 228 1262 260 1260 310 1260 345 1270 360 1285 360 1315 355 1318 320 1320 270 1325 320 1335 365 1360 367 1385 362 1390 320 1392 280 1395 330 1405 365 1430 368 1450 365 1455 335 1455 312"/>
      <path d="M325 594C365 590 410 568 440 578 470 595 470 640 478 666L478 632C490 610 515 595 535 598 550 610 550 675 578 677 610 670 640 590 655 540 660 480 680 450 670 410 662 390 652 390 647 405 635 450 650 500 655 540 665 580 675 610 688 633 690 600 705 580 725 580 760 595 765 675 820 680 860 680 885 650 880 620 870 600 855 610 857 640 860 690 880 725 912 722 930 718 935 710 940 702"/>
      <path d="M865 550 932 482M1168 436C1150 480 1152 560 1147 618"/>
      <g class="dots"><circle cx="1442" cy="113" r="12"/><circle cx="1312" cy="499" r="12"/><circle cx="1125" cy="725" r="17"/></g>
    </g>
  </g>
</svg>
</body>
</html>
```
FILE: styles.css
```css
* { box-sizing: border-box; }
body {
  margin: 0;
  width: 1920px;
  height: 1079px;
  overflow: hidden;
  display: flex;
  flex-direction: column;
  position: relative;
  background: #fff;
  font-family: "Liberation Sans", Arial, sans-serif;
}
.defs { position: absolute; }

/* Browser frame */
.chrome {
  flex: none;
  height: 129px;
  background: #35363a;
  border-bottom: 1px solid #5d5e62;
  font-family: "Open Sans", "Noto Sans", sans-serif;
  color: #f3f3f4;
}
.tabstrip {
  height: 43px;
  display: flex;
  align-items: flex-start;
  padding-left: 12px;
  background: #6b0080;
  border-bottom: 1px solid #9248ab;
}
.tab {
  flex: none;
  width: 198.2px;
  height: 42px;
  display: flex;
  align-items: center;
  padding-left: 13px;
  position: relative;
  color: #e6d3ec;
  font-size: 15px;
  letter-spacing: -.5px;
}
.tab::after {
  content: "";
  position: absolute;
  right: 0;
  top: 10px;
  width: 1px;
  height: 24px;
  background: #a865ba;
}
.tab.last::after, .tab.active::after { display: none; }
.fav { width: 20px; height: 20px; flex: none; }
.title {
  width: 119px;
  margin-left: 10px;
  margin-top: -1px;
  white-space: nowrap;
}
.fade {
  letter-spacing: -.65px;
  -webkit-mask-image: linear-gradient(90deg, #000 82%, transparent);
  mask-image: linear-gradient(90deg, #000 82%, transparent);
}
.check { width: 17px; height: 17px; margin-right: 6px; vertical-align: -3px; }
.x { width: 12px; height: 12px; margin-left: 10px; flex: none; }
.tab.active { color: #fff; left: -1px; }
.tab.active .fav { color: #b0b2b5; }
.tab.active > :not(.tabshape) { position: relative; }
.tabshape { position: absolute; left: -10px; top: 0; width: 218px; height: 43px; }
.plus { width: 16px; height: 16px; margin: 13.500px 0 0 18px; }
.wincontrols {
  margin-left: auto;
  display: grid;
  grid-template-columns: 57px 57px 56px 58px;
  place-items: center;
  height: 39px;
  width: 228px;
}
.toolbar { height: 45px; display: flex; align-items: center; }
.navbtns { width: 175px; display: flex; padding-left: 18px; gap: 20px; }
.navbtns svg { width: 20px; height: 20px; }
.omnibox {
  width: 1050px;
  height: 35px;
  border-radius: 18px;
  background: #202124;
  display: flex;
  align-items: center;
  padding: 0 12px 0 15px;
}
.chev { width: 14px; height: 8px; margin-right: 14px; }
.url { flex: 1; font-size: 17px; letter-spacing: -.32px; color: #9a9b9e; }
.url b { font-weight: 400; color: #fff; }
.act { width: 20px; height: 20px; margin-left: 20px; }
.exts {
  display: grid;
  grid-template-columns: repeat(17, 40px);
  place-items: center;
  margin-left: 7.500px;
}
.exts svg { width: 20px; height: 20px; }
.hext {
  width: 20px; height: 20px;
  background: #6c6c6c;
  color: #f4f4f4;
  font-size: 14px;
  line-height: 20px;
  text-align: center;
}
.avatar {
  width: 28px; height: 28px;
  border-radius: 50%;
  background: #fff;
  color: #222;
  font-size: 27px;
  line-height: 27px;
  text-align: center;
}
.bookmarks {
  display: grid;
  grid-template-columns: repeat(6, 40px) 108px 78px 102px 90px 153px 102px 187px 187px 130px 323px 26px 176px;
  align-items: center;
  height: 35px;
  padding-left: 18px;
  font-size: 15px;
  letter-spacing: -.5px;
  white-space: nowrap;
}
.bookmarks a { display: flex; align-items: center; gap: 10px; }
.bookmarks svg { width: 20px; height: 20px; flex: none; }
.bookmarks .white svg { color: #fff; }
.tgblue { color: #3d8bf0; }
.bookmarks .more { font-size: 18px; padding-left: 2px; }
.bookmarks .other { border-left: 1px solid #606165; padding-left: 12px; height: 24px; }

/* Page */
.viewport { flex: none; height: 891px; display: flex; }
.page { width: 1899px; height: 891px; position: relative; overflow: hidden; color: #666; }
.topbar {
  height: 62px;
  background: #0d5445;
  color: #fff;
  display: flex;
  align-items: center;
  padding: 5px 0 0 174px;
  font-size: 18.75px;
  box-shadow: 0 2px 8px rgba(0, 0, 0, .15);
  white-space: nowrap;
}
.topbar span { margin-left: 5px; }
.topbar .call { margin-right: 6px; margin-left: 4.500px; }
.brandbar {
  height: 147px;
  border-bottom: 1px solid #dfdfdf;
  display: flex;
  justify-content: space-between;
  align-items: flex-start;
  padding: 47px 200px 0 188px;
}
.logo-sm { width: 229px; height: 50px; }
.lang {
  font-size: 22.500px;
  line-height: 26px;
  margin-top: 11px;
  color: #ff6308;
  display: flex;
  align-items: center;
  gap: 13px;
}
.lang i { border: 7px solid transparent; border-top-color: #ff6308; border-bottom: 0; margin-top: -3px; }
.card {
  width: 887px;
  height: 700px;
  margin: 66px 0 0 506px;
  border: 1px solid #dedede;
}
.card-head {
  height: 281px;
  background: #f7f7f7;
  border-bottom: 1px solid #dedede;
  padding: 80px 0 0 183px;
}
.logo-lg { width: 530px; height: 115px; }
.alert {
  margin: 45px 25px 0;
  height: 59px;
  background: #f4d6d2;
  color: #6e2321;
  padding-left: 25px;
  font-size: 18.75px;
  line-height: 58px;
}
.cols { display: flex; gap: 37px; padding: 40px 0 0 98px; font-size: 18.75px; line-height: 28px; }
form { width: 326px; }
.field {
  height: 50px;
  border: 1px solid #d9dbdd;
  padding-left: 16px;
  line-height: 48px;
  color: #495057;
  margin-bottom: 20px;
}
.pass { background: #e8effc; display: flex; align-items: center; gap: .8px; }
.pass i { width: 5px; height: 5px; border-radius: 50%; background: #000; }
label { display: flex; align-items: center; gap: 6px; white-space: nowrap; }
label svg { margin-top: -5px; }
.side { width: 290px; }
.side p { margin: 0 0 20px; }
.side a { color: #ff6308; }
.help {
  display: inline-flex;
  align-items: center;
  width: 33px;
  height: 22px;
  padding-left: 2px;
  margin-left: -1px;
  border: 1px solid #efefef;
  vertical-align: -3px;
}
.popup {
  position: absolute;
  left: 1061px;
  top: 20px;
  width: 818px;
  height: 94px;
  border-radius: 20px;
  background: #fff;
  box-shadow: 0 12px 40px rgba(0, 0, 0, .15);
  padding: 10px 11px;
  white-space: nowrap;
}
.popup h2 { margin: 0; font-size: 28.100px; line-height: 34px; font-weight: 400; color: #127c62; margin-left: -1px; }
.popup p { margin: 12px 0 0; font-size: 19.980px; line-height: 26px; font-weight: 700; }
.status {
  position: absolute;
  left: 0;
  bottom: 0;
  width: 358px;
  height: 27px;
  border-radius: 0 5px 0 0;
  background: #35363a;
  color: #c4c5c8;
  padding-left: 5px;
  font: 15px/26px "Open Sans", "Noto Sans", sans-serif;
  letter-spacing: -.46px;
  white-space: nowrap;
}
.scrollbar {
  width: 21px;
  background: #f1f1f1;
  display: flex;
  flex-direction: column;
  align-items: center;
}
.scrollbar i { border: 5px solid transparent; }
.scrollbar .up { border-bottom-color: #a3a3a3; border-top: 0; margin: 9px 0 7px; }
.scrollbar .down { border-top-color: #505050; border-bottom: 0; margin: auto 0 8px; }
.thumb { width: 17px; height: 487px; background: #c1c1c1; }

/* Logo lettering */
.ring-text { font: 700 11.500px "Liberation Sans", Arial, sans-serif; fill: #2a5aa3; }
.khtn { font: 700 8px "Liberation Sans", Arial, sans-serif; fill: #fff; stroke: #fff; stroke-width: .3px; }
.city { font: 700 10px "Liberation Sans", Arial, sans-serif; fill: #2a5aa3; }
.word { font: 700 76px "Open Sans", "Noto Sans", sans-serif; fill: #16489f; stroke: #16489f; stroke-width: 1.200px; }
.word.at { font-size: 68px; font-weight: 600; }

/* Taskbar */
.taskbar {
  flex: none;
  height: 59px;
  display: flex;
  justify-content: space-between;
  background: linear-gradient(90deg, #261c3d 0, #261b3b 25%, #36193a 32%, #391b2f 40%, #352523 48%, #352424 55%, #481219 64%, #4d1219 70%, #461513 76%, #3d140f 84%, #33191a 95%, #2c191c 100%);
}
.apps { display: flex; padding-left: 465.500px; }
.apps > span {
  width: 55.030px;
  display: grid;
  place-items: center;
  position: relative;
}
.apps svg { width: 30px; height: 30px; position: relative; }
.apps .open::before {
  content: "";
  position: absolute;
  inset: 5px 3px;
  border-radius: 5px;
  background: rgba(255, 120, 120, .1);
}
.dot::after, .current::after {
  content: "";
  position: absolute;
  bottom: 5px;
  left: 23.500px;
  width: 8px;
  height: 4px;
  border-radius: 2px;
  background: #a59797;
}
.current::after { left: 17.500px; width: 20px; background: #d79be6; }
.tg2 { color: #2b9fd9; }
.pdf { font: 700 7px "Liberation Sans", Arial, sans-serif; fill: #fff; }
.dev { font: 6px "Open Sans", sans-serif; fill: #ddd; }
.ps {
  width: 27px;
  height: 27px;
  border-radius: 5px;
  background: #001e36;
  color: #31a8ff;
  font: 700 16px/25px "Open Sans", sans-serif;
  text-align: center;
}
.tray {
  display: grid;
  grid-template-columns: 29px 31px 35px 30px 30px 87px 48px;
  width: 300px;
  padding-right: 10px;
  align-items: center;
  justify-items: center;
  color: #fff;
}
.clock {
  justify-self: end;
  font: 15px/20px "Open Sans", "Noto Sans", sans-serif;
  letter-spacing: -.45px;
  text-align: right;
  white-space: nowrap;
}
.badge {
  width: 25px;
  height: 20px;
  border-radius: 10px;
  background: #dc9ee8;
  color: #222;
  font: 14px/20px "Open Sans", sans-serif;
  text-align: center;
}

/* Freehand marks over the screen */
.ink { position: absolute; left: 0; top: 0; width: 1920px; height: 1079px; pointer-events: none; }
.ink path { fill: none; stroke: #ff4500; stroke-width: 28.500px; stroke-linecap: round; stroke-linejoin: round; }
.ink .head { stroke-width: 26px; }
.ink .dots { fill: #ff4500; }
```
